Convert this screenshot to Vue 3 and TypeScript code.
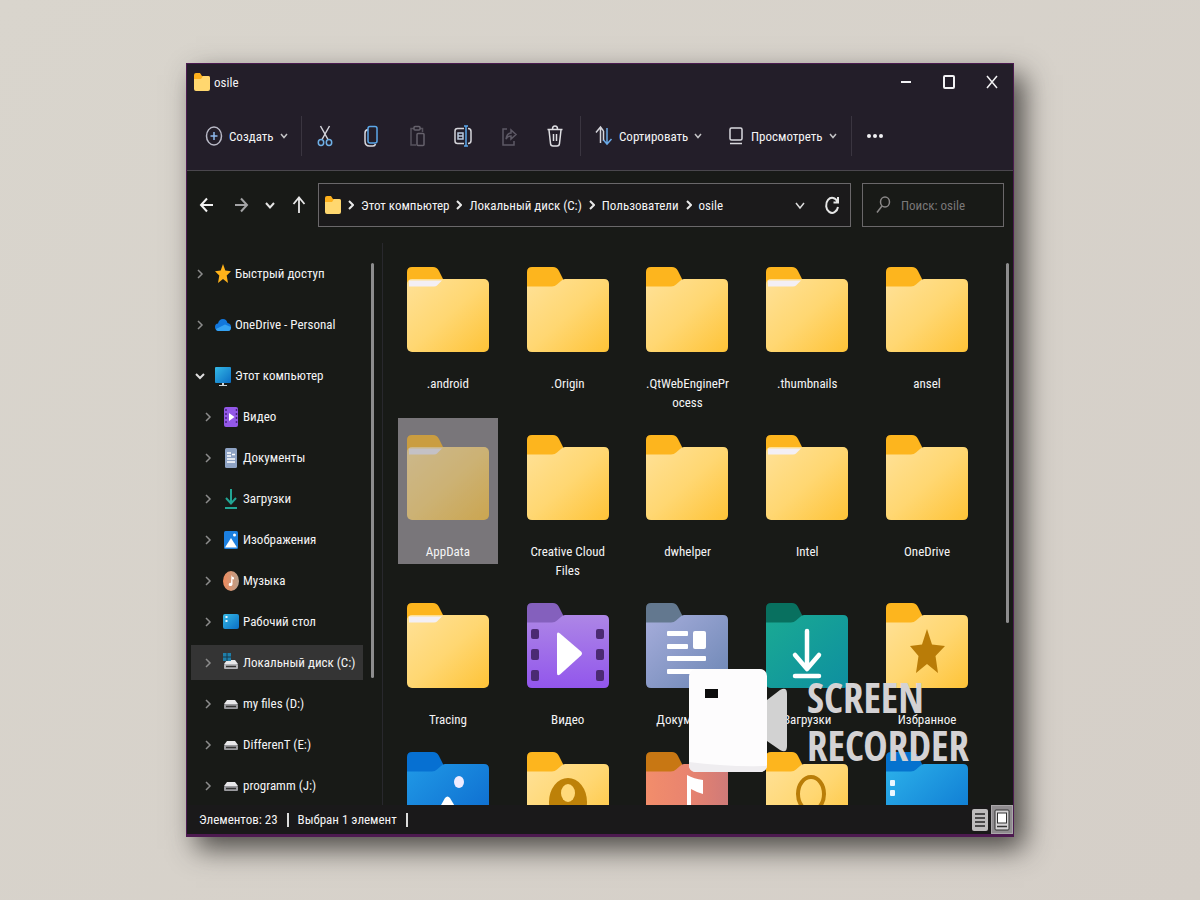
<script setup lang="ts">
interface NavItem { label: string; icon: string; child?: boolean; open?: boolean; active?: boolean }
interface FolderItem { label: string; tone?: string; sheet?: boolean; selected?: boolean; glyph?: string }

const crumbs: string[] = ['Этот компьютер', 'Локальный диск (C:)', 'Пользователи', 'osile']

const navItems: NavItem[] = [
  { label: 'Быстрый доступ', icon: 'star' },
  { label: 'OneDrive - Personal', icon: 'cloud' },
  { label: 'Этот компьютер', icon: 'pc', open: true },
  { label: 'Видео', icon: 'video', child: true },
  { label: 'Документы', icon: 'doc', child: true },
  { label: 'Загрузки', icon: 'down', child: true },
  { label: 'Изображения', icon: 'image', child: true },
  { label: 'Музыка', icon: 'music', child: true },
  { label: 'Рабочий стол', icon: 'desk', child: true },
  { label: 'Локальный диск (C:)', icon: 'sysdrive', child: true, active: true },
  { label: 'my files (D:)', icon: 'drive', child: true },
  { label: 'DifferenT (E:)', icon: 'drive', child: true },
  { label: 'programm (J:)', icon: 'drive', child: true },
]

const folders: FolderItem[] = [
  { label: '.android', sheet: true },
  { label: '.Origin' },
  { label: '.QtWebEnginePr\nocess' },
  { label: '.thumbnails', sheet: true },
  { label: 'ansel' },
  { label: 'AppData', sheet: true, selected: true },
  { label: 'Creative Cloud\nFiles' },
  { label: 'dwhelper' },
  { label: 'Intel', sheet: true },
  { label: 'OneDrive' },
  { label: 'Tracing', sheet: true },
  { label: 'Видео', tone: 'purple', glyph: 'play' },
  { label: 'Документы', tone: 'slate', glyph: 'page' },
  { label: 'Загрузки', tone: 'teal', glyph: 'arrow' },
  { label: 'Избранное', glyph: 'fav' },
  { label: '', tone: 'blue', glyph: 'photo' },
  { label: '', glyph: 'person' },
  { label: '', tone: 'coral', glyph: 'note' },
  { label: '', glyph: 'lens' },
  { label: '', tone: 'sky', glyph: 'dots' },
]

const tabs: Record<string, string> = {
  yellow: '#fdb51e', purple: '#8460bd', slate: '#63788f', teal: '#08705f',
  blue: '#0670d2', coral: '#c87713', sky: '#0572ce',
}

const glyphs: Record<string, string> = {
  play: '<g fill="#4b2a72"><rect x="4" y="26" width="8" height="10" rx="2"/><rect x="4" y="46" width="8" height="11" rx="2"/><rect x="4" y="67" width="8" height="11" rx="2"/><rect x="69" y="26" width="8" height="10" rx="2"/><rect x="69" y="46" width="8" height="11" rx="2"/><rect x="69" y="67" width="8" height="11" rx="2"/></g><path d="M30 31.500Q30 28 33 30.500L54 48.500Q56 50.500 54 52.500L33 71.500Q30 73.500 30 70Z" fill="#fff"/>',
  page: '<g fill="#fff"><rect x="21" y="28" width="21" height="5" rx="1"/><rect x="21" y="41" width="21" height="5" rx="1"/><rect x="47" y="28" width="13" height="18" rx="2"/><rect x="21" y="53" width="39" height="5" rx="1"/><rect x="21" y="66" width="39" height="5" rx="1"/></g>',
  arrow: '<path d="M41 28V65M29 52L41 66L53 52M29 73H53" fill="none" stroke="#fff" stroke-width="4.500" stroke-linecap="round" stroke-linejoin="round"/>',
  fav: '<path d="M41 26L46 41.500L59 43L49.500 53L52 70L41 61L30 70L32.500 53L24 43L36 41.500Z" fill="#b97c08"/>',
  photo: '<ellipse cx="52" cy="30" rx="5" ry="6" fill="#f0ecff"/><path d="M16 85L38 46Q40.500 43 43 46L66 85Z" fill="#fff"/>',
  person: '<ellipse cx="41" cy="50" rx="19" ry="24" fill="#bd8108"/><ellipse cx="41" cy="41" rx="7" ry="9" fill="#ffd97a"/>',
  note: '<path d="M41 23Q48 27 57 28V42Q50 40 45 37V62H41Z" fill="#fff"/>',
  lens: '<ellipse cx="45" cy="42" rx="13" ry="17" fill="none" stroke="#b97d08" stroke-width="4"/>',
  dots: '<g fill="#eaf6ff"><rect x="4" y="28" width="5" height="6" rx="1"/><rect x="4" y="38" width="5" height="6" rx="1"/></g>',
}

const icons: Record<string, string> = {
  plus: '<ellipse cx="10" cy="11" rx="7.500" ry="9" stroke="#b9b9c6"/><path d="M10 7V15M6.500 11H13.500" stroke="#8fb9ec"/>',
  cut: '<path d="M5.500 1L13 14.500M14.500 1L7 14.500" stroke="#d4d4da"/><ellipse cx="6" cy="17.500" rx="2.700" ry="3" stroke="#6fb0e6"/><ellipse cx="14" cy="17.500" rx="2.700" ry="3" stroke="#6fb0e6"/>',
  copy: '<path d="M7 4.500Q4 5 4 8V16Q4 21 8.500 21H12Q14 21 14.500 19" stroke="#d9d9df"/><rect x="7" y="1.500" width="9" height="16.500" rx="2" stroke="#5ca8ea"/>',
  paste: '<path d="M7 3.500H4V20H9M13 3.500H15.500V7" stroke="#56525c"/><rect x="7" y="1.500" width="6" height="3.500" rx="1" stroke="#66626c"/><rect x="10" y="8.500" width="7" height="12" rx="1" stroke="#66626c"/>',
  rename: '<path d="M11 3.500H4.500Q2 3.500 2 6V16Q2 18.500 4.500 18.500H11M15 3.500Q18 3.500 18 6.500V15.500Q18 18.500 15 18.500" stroke="#d5d5da"/><path d="M5 8H10V14H5ZM5 11H10" stroke="#b9c9dd"/><path d="M13 1V21M11 1H15M11 21H15" stroke="#5ca8ea"/>',
  share: '<path d="M8 4H4V20H15V16" stroke="#5d5965"/><path d="M7 14Q8 8 12 8V5L17 9.500L12 14V11Q9 11 7 14Z" stroke="#5d5965"/>',
  trash: '<path d="M2.500 4.500H17.500M7.500 4Q7.500 1 10 1T12.500 4M4 5L5.500 18.500Q5.700 21 8 21H12Q14.300 21 14.500 18.500L16 5M8.500 9V16M11.500 9V16" stroke="#dedee2"/>',
  sort: '<path d="M6.500 18V2M2 7.500L6.500 2L9.500 6M9.500 6V16" stroke="#d4d4da"/><path d="M13 3V19M9.500 15L13 19L17.500 14" stroke="#6aa9e6"/>',
  view: '<rect x="4" y="3" width="12" height="12" rx="1.500" stroke="#d9d9de"/><path d="M4 18.500H16" stroke="#d9d9de"/>',
  back: '<path d="M16 11H4.500M10 4.500L4 11L10 17.500" stroke="#f2f2f2" stroke-width="2"/>',
  fwd: '<path d="M4 11H15.500M10 4.500L16 11L10 17.500" stroke="#a3a3a5" stroke-width="2"/>',
  up: '<path d="M10 19V4M4.500 10L10 3.500L15.500 10" stroke="#e8e8e8" stroke-width="1.800"/>',
  chev: '<path d="M7 9L10 12.500L13 9" stroke="#c4c4c6"/>',
  refresh: '<path d="M15.500 8A6 7.500 0 1 0 16 13M16 3V8.500H11.500" stroke="#e6e6e6" stroke-width="2"/>',
  search: '<ellipse cx="12" cy="8" rx="4.500" ry="5" stroke="#8a8888"/><path d="M9 12L4 18.500" stroke="#8a8888"/>',
}

const navIcons: Record<string, string> = {
  star: '<path d="M8 1L10.300 7.500L16 8.300L11.700 12.500L13 20L8 16L3 20L4.300 12.500L0 8.300L5.700 7.500Z" fill="#ffb21a"/>',
  cloud: '<path d="M3 17Q0 16 0 13Q0 9.500 3 9.500Q4 5 8 5Q11.500 5 12.500 9Q16 9.500 16 13Q16 17 13 17Z" fill="#1277dc"/><path d="M3 17Q1 16.500 1 15L10 10.500L16 13Q16 17 13 17Z" fill="#35a2f2"/>',
  pc: '<rect width="16" height="16" y="2" rx="1" fill="url(#g-screen)"/><path d="M7 18H9V20H12V21H4V20H7Z" fill="#cfd6da"/>',
  video: '<rect x="1" y="1" width="14" height="20" rx="2" fill="#9358e8"/><path d="M6 7L11.500 11L6 15Z" fill="#fff"/><path d="M3 3V19M13.500 3V19" stroke="#4b2384" stroke-width="1.500" stroke-dasharray="2 2"/>',
  doc: '<rect x="2" y="1" width="12" height="20" rx="1.500" fill="#8ea3c4"/><path d="M4 6H8M4 9H8M4 12H12M4 15H12M9 7.500H12" stroke="#fff" stroke-width="1.500"/>',
  down: '<path d="M8 1V15M3 10L8 15.500L13 10M2 20H14" fill="none" stroke="#22a594" stroke-width="2"/>',
  image: '<rect x="1" y="2" width="14" height="18" rx="1.500" fill="#1b7fe0"/><path d="M2 18.500L8 9L14 18.500Z" fill="#fff"/><circle cx="11.500" cy="6" r="1.500" fill="#fff"/>',
  music: '<ellipse cx="8" cy="11" rx="8" ry="10" fill="url(#g-music)"/><path d="M8.500 5Q9 7 11 7.500V9.500L9.500 9V14.500Q9 16.500 7 16Q5 15.500 6 13.500Q6.800 12.500 8 13Z" fill="#fff"/>',
  desk: '<rect y="3" width="16" height="15" rx="2" fill="url(#g-screen)"/><path d="M2.500 6H4.500M2.500 10H4.500" stroke="#e8f6ff" stroke-width="2"/>',
  drive: '<path d="M4 7H12L15 11H1Z" fill="#e8e8ea"/><rect x="1" y="11" width="14" height="5" rx="1" fill="#9a9a9e"/><path d="M3 13.500H13" stroke="#333" stroke-width="1.500"/>',
  sysdrive: '<path d="M4 8H12L15 12H1Z" fill="#e8e8ea"/><rect x="1" y="12" width="14" height="5" rx="1" fill="#b5b5b9"/><path d="M3 14.500H13" stroke="#333" stroke-width="1.500"/><rect y="1" width="8" height="8" fill="#1f7ea8"/><path d="M4 1V9M0 5H8" stroke="#16384a"/>',
}
</script>

<template>
  <div class="page">
    <svg class="defs" width="0" height="0" aria-hidden="true">
      <defs>
        <linearGradient id="g-yellow" x1="0" y1="0" x2="1" y2="1"><stop offset="0" stop-color="#ffe197" /><stop offset=".5" stop-color="#ffd772" /><stop offset="1" stop-color="#fec337" /></linearGradient>
        <linearGradient id="g-purple" x1="0" y1="0" x2="0" y2="1"><stop offset="0" stop-color="#ad86e6" /><stop offset="1" stop-color="#9256ec" /></linearGradient>
        <linearGradient id="g-slate" x1="0" y1="0" x2="1" y2="1"><stop offset="0" stop-color="#a6addb" /><stop offset="1" stop-color="#6c86b4" /></linearGradient>
        <linearGradient id="g-teal" x1="0" y1="0" x2="1" y2="1"><stop offset="0" stop-color="#1aaa93" /><stop offset="1" stop-color="#0e8fa0" /></linearGradient>
        <linearGradient id="g-blue" x1="0" y1="0" x2="1" y2="1"><stop offset="0" stop-color="#2099e6" /><stop offset="1" stop-color="#0b66cc" /></linearGradient>
        <linearGradient id="g-coral" x1="0" y1="0" x2="1" y2="0"><stop offset="0" stop-color="#f28d6b" /><stop offset=".5" stop-color="#e9846f" /><stop offset="1" stop-color="#cf7a78" /></linearGradient>
        <linearGradient id="g-sky" x1="0" y1="0" x2="1" y2="1"><stop offset="0" stop-color="#2cb1ea" /><stop offset="1" stop-color="#0a72cf" /></linearGradient>
        <linearGradient id="g-screen" x1="0" y1="0" x2="1" y2="1"><stop offset="0" stop-color="#35b9e6" /><stop offset="1" stop-color="#0a6dc4" /></linearGradient>
        <linearGradient id="g-music" x1="0" y1="0" x2="1" y2="0"><stop offset="0" stop-color="#ef8a5c" /><stop offset="1" stop-color="#b9a08c" /></linearGradient>
      </defs>
    </svg>

    <main class="window">
      <header class="titlebar">
        <svg class="mini" viewBox="0 0 16 18"><path d="M0 2Q0 0 2 0H6L8 3H14Q16 3 16 5V9H0Z" fill="#fdb01c" /><path d="M0 6H7L9 3H14Q16 3 16 5V16Q16 18 14 18H2Q0 18 0 16Z" fill="#ffd76f" /></svg>
        <h1>osile</h1>
        <div class="controls">
          <button type="button" aria-label="Свернуть"><svg viewBox="0 0 20 20"><path d="M5 10H15" stroke-width="2" /></svg></button>
          <button type="button" aria-label="Развернуть"><svg viewBox="0 0 20 20"><rect x="5" y="4" width="10" height="12" rx="1" stroke-width="2" /></svg></button>
          <button type="button" aria-label="Закрыть"><svg viewBox="0 0 20 20"><path d="M5 4L15 16M15 4L5 16" /></svg></button>
        </div>
      </header>

      <div class="toolbar">
        <button type="button" class="tool create"><svg class="ico" viewBox="0 0 20 22" v-html="icons.plus" /><span>Создать</span><svg class="caret" viewBox="5 7 10 8" v-html="icons.chev" /></button>
        <i class="sep" />
        <button v-for="t in ['cut', 'copy', 'paste', 'rename', 'share', 'trash']" :key="t" type="button" class="tool icon-only" :aria-label="t"><svg class="ico" viewBox="0 0 20 22" v-html="icons[t]" /></button>
        <i class="sep" />
        <button type="button" class="tool order"><svg class="ico" viewBox="0 0 20 22" v-html="icons.sort" /><span>Сортировать</span><svg class="caret" viewBox="5 7 10 8" v-html="icons.chev" /></button>
        <button type="button" class="tool order"><svg class="ico" viewBox="0 0 20 22" v-html="icons.view" /><span>Просмотреть</span><svg class="caret" viewBox="5 7 10 8" v-html="icons.chev" /></button>
        <i class="sep" />
        <button type="button" class="tool icon-only" aria-label="Ещё"><svg class="ico" viewBox="0 0 20 22"><g fill="#f0f0f2"><circle cx="4" cy="11" r="2" /><circle cx="10" cy="11" r="2" /><circle cx="16" cy="11" r="2" /></g></svg></button>
      </div>

      <div class="navbar">
        <div class="history">
          <button type="button" aria-label="Назад"><svg class="ico" viewBox="0 0 20 22" v-html="icons.back" /></button>
          <button type="button" aria-label="Вперёд"><svg class="ico" viewBox="0 0 20 22" v-html="icons.fwd" /></button>
          <button type="button" class="slim" aria-label="Последние"><svg class="ico" viewBox="0 0 20 22"><path d="M6 9L10 13.500L14 9" stroke="#e4e4e4" stroke-width="2" /></svg></button>
          <button type="button" aria-label="Вверх"><svg class="ico" viewBox="0 0 20 22" v-html="icons.up" /></button>
        </div>
        <nav class="address" aria-label="Адрес">
          <svg class="mini" viewBox="0 0 16 18"><path d="M0 2Q0 0 2 0H6L8 3H14Q16 3 16 5V9H0Z" fill="#fdb01c" /><path d="M0 6H7L9 3H14Q16 3 16 5V16Q16 18 14 18H2Q0 18 0 16Z" fill="#ffd76f" /></svg>
          <template v-for="c in crumbs" :key="c">
            <svg class="arrow" viewBox="0 0 6 10"><path d="M1 1L5 5L1 9" /></svg>
            <a href="#">{{ c }}</a>
          </template>
          <span class="grow" />
          <button type="button" aria-label="История"><svg class="ico" viewBox="0 0 20 22"><path d="M6 9L10 14L14 9" stroke="#dcdcdc" /></svg></button>
          <button type="button" aria-label="Обновить"><svg class="ico" viewBox="0 0 20 22" v-html="icons.refresh" /></button>
        </nav>
        <label class="search"><svg class="ico" viewBox="0 0 20 22" v-html="icons.search" /><input type="text" placeholder="Поиск: osile" aria-label="Поиск"></label>
      </div>

      <div class="body">
        <aside class="sidebar">
          <ul>
            <li v-for="n in navItems" :key="n.label" :class="{ child: n.child, open: n.open }">
              <a href="#" :class="{ active: n.active }">
                <svg class="twist" :class="{ open: n.open }" viewBox="0 0 10 10"><path d="M3 1L7 5L3 9" /></svg>
                <svg class="nav-ico" viewBox="0 0 16 22" v-html="navIcons[n.icon]" />
                <span>{{ n.label }}</span>
              </a>
            </li>
          </ul>
          <div class="track"><i class="thumb side" /></div>
        </aside>
        <section class="files">
          <div class="grid">
            <figure v-for="(f, i) in folders" :key="i" class="tile" :class="{ selected: f.selected }">
              <svg class="folder" viewBox="0 0 82 85">
                <path d="M0 5Q0 0 5 0H26Q30 0 32 4L36 12V24H0Z" :fill="tabs[f.tone ?? 'yellow']" />
                <template v-if="f.sheet">
                  <rect y="12" width="82" height="73" rx="5" :fill="`url(#g-${f.tone ?? 'yellow'})`" />
                  <path d="M2 13.500H35L30 18.500Q29 19.500 27 19.500H2Z" fill="#f3eff5" />
                </template>
                <path v-else d="M0 19.500H25Q28 19.500 30 17.500L34 14Q36 12 38 12H77Q82 12 82 17V80Q82 85 77 85H5Q0 85 0 80Z" :fill="`url(#g-${f.tone ?? 'yellow'})`" />
                <g v-if="f.glyph" v-html="glyphs[f.glyph]" />
              </svg>
              <figcaption v-if="f.label">{{ f.label }}</figcaption>
            </figure>
          </div>
          <div class="track"><i class="thumb main" /></div>
        </section>
      </div>

      <footer class="status">
        <span>Элементов: 23</span><i /><span>Выбран 1 элемент</span><i />
        <div class="modes">
          <button type="button" aria-label="Таблица"><svg width="16" height="22" viewBox="0 0 16 22"><rect width="16" height="22" rx="2" fill="#bdbbbc" /><path d="M3 5H13M3 9H13M3 13H13M3 17H13" stroke="#252525" stroke-width="1.500" /></svg></button>
          <button type="button" class="on" aria-label="Значки"><svg width="16" height="22" viewBox="0 0 16 22"><rect x="1" y="1" width="14" height="20" rx="1" fill="#d6d4d6" stroke="#333" stroke-width="1" /><rect x="3.500" y="4" width="9" height="10" fill="#fff" stroke="#333" /><path d="M3 17.500H13" stroke="#333" stroke-width="1.500" /></svg></button>
        </div>
      </footer>

      <div class="watermark">
        <svg width="98" height="103" viewBox="0 0 98 103"><path d="M78 31L91 21Q98 17 98 25V77Q98 85 91 81L78 72Z" fill="#d2d2d2" /><rect width="78" height="103" rx="7" fill="#fdfcfd" /><path d="M0 93Q36 98 78 97Q77 103 71 103H7Q0 103 0 96Z" fill="#efedf0" /><rect x="16" y="20" width="13" height="9" fill="#0c0c0c" /></svg>
        <p>SCREEN<br>RECORDER</p>
      </div>
    </main>
  </div>
</template>

<style>
body { margin: 0; background: #d7d2ca; }
</style>

<style scoped>
* { box-sizing: border-box; }
.page {
  height: 100vh; padding: 63px 186px; display: grid;
  background: linear-gradient(135deg, #d9d5cd, #d5cfc8);
  font: 13px/19px "Roboto Condensed", Roboto, "Open Sans", sans-serif; color: #f4f4f5;
}
.defs { position: absolute; }
.window {
  position: relative; display: flex; flex-direction: column; min-height: 0; overflow: hidden;
  background: #181a17; border: 1px solid #4b1b50; border-bottom: 3px solid #4d1a50;
  box-shadow: 10px 12px 26px 0 rgba(45, 43, 40, .8);
}
button { appearance: none; border: 0; padding: 0; margin: 0; background: none; color: inherit; font: inherit; display: flex; align-items: center; justify-content: center; }
a { color: inherit; text-decoration: none; }
svg { flex: none; fill: none; display: block; }
.ico { width: 20px; height: 22px; stroke-width: 1.5; }
.mini { width: 16px; height: 18px; }
.titlebar { height: 36px; padding-left: 7px; display: flex; align-items: center; gap: 4px; background: #231e29; }
.titlebar h1 { margin: 0; font: inherit; }
.controls { margin-left: auto; display: flex; }
.controls button { width: 43px; height: 36px; }
.controls svg { width: 20px; height: 20px; stroke: #f2f2f4; stroke-width: 1.5; }
.toolbar { height: 71px; padding-top: 2px; display: flex; align-items: center; background: #231e29; border-bottom: 1px solid #4a474d; }
.sep { flex: none; width: 1px; height: 40px; background: #3a3540; }
.tool { flex: none; height: 40px; }
.tool.create { width: 114px; justify-content: flex-start; padding-left: 17px; gap: 5px; }
.tool.icon-only { width: 46px; }
.icon-only + .sep { margin-left: 2px; }
.tool.order { width: 132px; justify-content: flex-start; padding-left: 13px; gap: 5px; }
.order + .sep { margin-left: 6px; }
.caret { width: 10px; height: 8px; stroke-width: 1.5; }
.navbar { height: 68px; padding: 0 9px 0 3px; display: flex; align-items: center; }
.history { display: flex; width: 128px; }
.history button { width: 34px; height: 36px; }
.history .slim { width: 24px; }
.address { flex: 1; height: 44px; padding: 0 6px; display: flex; align-items: center; gap: 8px; background: #1b1a1b; border: 1px solid #6a686a; white-space: nowrap; }
.arrow { width: 6px; height: 10px; stroke: #e8e8e8; stroke-width: 2; margin: 0 -1px; }
.grow { flex: 1; }
.address button { width: 24px; height: 30px; }
.search { width: 142px; height: 44px; margin-left: 11px; padding-left: 10px; display: flex; align-items: center; gap: 8px; border: 1px solid #6a686a; }
.search input { width: 100%; min-width: 0; border: 0; padding: 0; background: none; font: inherit; color: #eee; outline: none; }
.search input::placeholder { color: #7a7878; opacity: 1; }
.body { flex: 1; min-height: 0; display: flex; overflow: hidden; }
.sidebar { flex: none; width: 196px; margin-top: 4px; padding: 10px 0 0 4px; display: flex; border-right: 1px solid #28282d; }
.sidebar ul { flex: 1; min-width: 0; margin: 0; padding: 0; list-style: none; }
.sidebar li { height: 41px; margin-bottom: 10px; display: flex; align-items: center; }
.sidebar li.child, .sidebar li.open { margin-bottom: 0; }
.sidebar a { width: 100%; height: 35px; padding-left: 4px; display: flex; align-items: center; gap: 4px; white-space: nowrap; }
.child a { padding-left: 12px; }
.sidebar a.active { background: #343434; }
.twist { width: 10px; height: 10px; margin-right: 6px; stroke: #8c8c8c; stroke-width: 1.5; }
.twist.open { transform: rotate(90deg); stroke: #dedede; stroke-width: 2; }
.nav-ico { width: 16px; height: 22px; }
.track { flex: none; padding-top: 10px; }
.thumb { display: block; width: 3px; border-radius: 2px; background: #8d8d8e; }
.thumb.side { height: 415px; margin: 0 8px; }
.thumb.main { height: 360px; margin: 14px 4px 0 0; }
.files { flex: 1; min-width: 0; display: flex; }
.grid { flex: 1; min-width: 0; margin-right: 19px; padding: 11px 0 0 5px; display: grid; grid-template-columns: repeat(5, 1fr); row-gap: 3px; align-content: start; align-items: start; justify-items: center; }
.tile { margin: 0; width: 100px; padding: 17px 0 3px; display: flex; flex-direction: column; align-items: center; gap: 22px; }
.tile.selected { background: #79767a; }
.tile.selected .folder { opacity: .62; }
.folder { width: 82px; height: 85px; }
figcaption { white-space: pre; text-align: center; }
.status { height: 29px; padding-left: 12px; display: flex; align-items: center; gap: 9px; background: #1a191a; }
.status i { width: 2px; height: 14px; background: #dcdcdc; }
.modes { margin-left: auto; display: flex; height: 29px; }
.modes button { width: 22px; }
.modes .on { background: #8f8c8f; border: 1px solid #aaa7aa; }
.watermark { position: absolute; right: 42px; bottom: 62px; display: flex; align-items: center; gap: 20px; }
.watermark p { margin: 0; width: 164px; font: 700 41px/48px "Open Sans Condensed", "Open Sans", sans-serif; color: #d4d2d4; }
</style>
